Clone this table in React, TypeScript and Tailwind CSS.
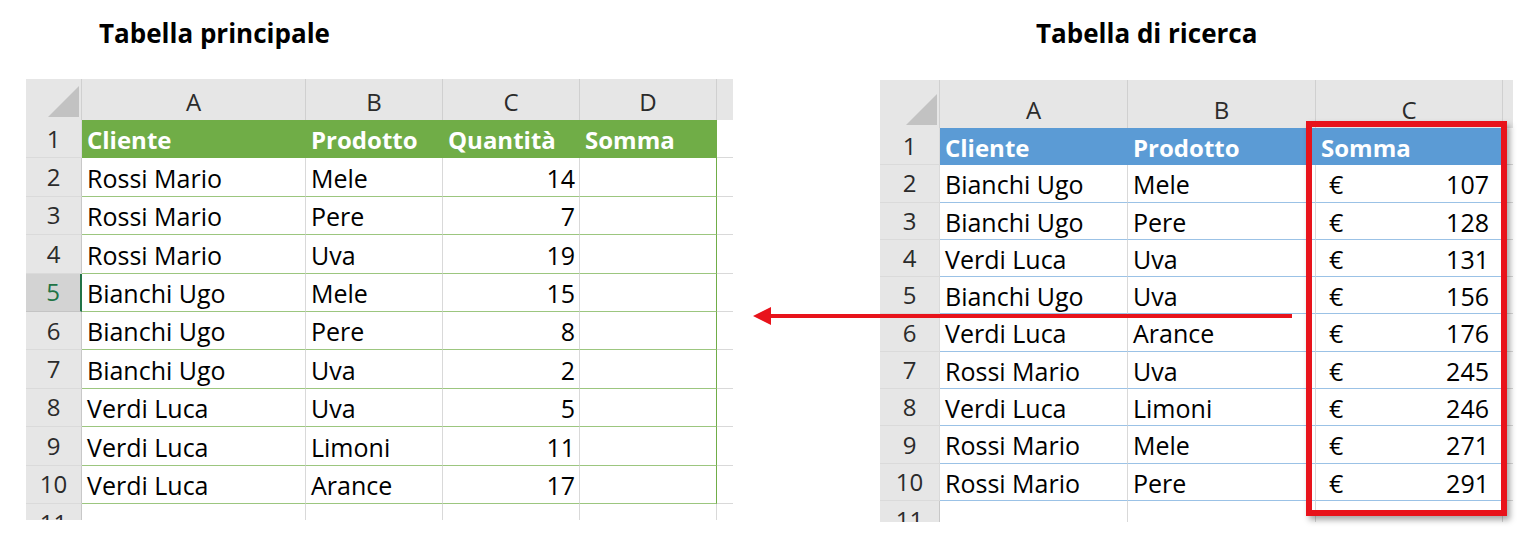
import React from 'react';

const leftRows: string[][] = [
  ['Rossi Mario', 'Mele', '14', ''],
  ['Rossi Mario', 'Pere', '7', ''],
  ['Rossi Mario', 'Uva', '19', ''],
  ['Bianchi Ugo', 'Mele', '15', ''],
  ['Bianchi Ugo', 'Pere', '8', ''],
  ['Bianchi Ugo', 'Uva', '2', ''],
  ['Verdi Luca', 'Uva', '5', ''],
  ['Verdi Luca', 'Limoni', '11', ''],
  ['Verdi Luca', 'Arance', '17', ''],
];

const rightRows: string[][] = [
  ['Bianchi Ugo', 'Mele', '107'],
  ['Bianchi Ugo', 'Pere', '128'],
  ['Verdi Luca', 'Uva', '131'],
  ['Bianchi Ugo', 'Uva', '156'],
  ['Verdi Luca', 'Arance', '176'],
  ['Rossi Mario', 'Uva', '245'],
  ['Verdi Luca', 'Limoni', '246'],
  ['Rossi Mario', 'Mele', '271'],
  ['Rossi Mario', 'Pere', '291'],
];

function Corner({ w }: { w: string }) {
  return (
    <div className={`${w} h-full flex items-end justify-end pr-[2px] pb-[3px] border-r border-[#d0d0d0]`}>
      <div className="w-[31px] h-[31px] bg-[#c2c2c2] [clip-path:polygon(100%_0,100%_100%,0_100%)]" />
    </div>
  );
}

function LeftSheet() {
  const cols = ['w-[224px]', 'w-[137px]', 'w-[137px]', 'w-[137px]'];
  const rowH = 'h-[38.4px]';
  return (
    <div className="w-[707px] h-[441px] overflow-hidden">
      {/* column letters */}
      <div className="flex h-[41px] bg-[#e6e6e6] text-[24px] text-[#2b2b2b]">
        <Corner w="w-[56px]" />
        {['A', 'B', 'C', 'D'].map((l, i) => (
          <div key={l} className={`${cols[i]} flex items-end justify-center pb-[4px] leading-none border-r border-[#d0d0d0]`}>
            <span className="mb-[2px]">{l}</span>
          </div>
        ))}
        <div className="flex-1" />
      </div>

      {/* header row */}
      <div className={`flex ${rowH}`}>
        <div className="w-[56px] flex items-center justify-center bg-[#e6e6e6] border-r border-[#c8c8c8] border-b border-[#dadada] text-[24px] text-[#2b2b2b]">1</div>
        <div className="flex bg-[#70ad47] text-white font-bold text-[24px]">
          {['Cliente', 'Prodotto', 'Quantità', 'Somma'].map((h, i) => (
            <div key={h} className={`${cols[i]} flex items-center pl-[5px] pt-[2px]`}>{h}</div>
          ))}
        </div>
        <div className="flex-1 border-b border-[#d9d9d9]" />
      </div>

      {leftRows.map((r, ri) => {
        const selected = ri === 3;
        return (
          <div key={ri} className={`flex ${rowH}`}>
            <div className={`w-[56px] flex items-center justify-center border-b text-[24px] ${selected ? 'bg-[#d3d3d3] text-[#217346] border-[#c4c4c4] border-r-[2px] border-r-[#217346]' : 'bg-[#e6e6e6] text-[#2b2b2b] border-[#dadada] border-r border-r-[#c8c8c8]'}`}>
              {ri + 2}
            </div>
            {r.map((c, ci) => (
              <div
                key={ci}
                className={`${cols[ci]} flex items-center pt-[3px] text-[25px] text-black border-b border-[#9cc67f] ${ci === 3 ? 'border-r border-r-[#70ad47]' : 'border-r border-r-[#d9d9d9]'} ${ci === 2 ? 'justify-end pr-[4px]' : 'pl-[5px]'}`}
              >
                {c}
              </div>
            ))}
            <div className="flex-1 border-b border-[#d9d9d9]" />
          </div>
        );
      })}

      {/* row 11 */}
      <div className={`flex ${rowH}`}>
        <div className="w-[56px] flex items-center justify-center bg-[#e6e6e6] border-r border-[#c8c8c8] text-[24px] text-[#2b2b2b]">11</div>
        {cols.map((w, i) => (
          <div key={i} className={`${w} border-r border-[#d9d9d9]`} />
        ))}
      </div>
    </div>
  );
}

function RightSheet() {
  const cols = ['w-[188px]', 'w-[188px]', 'w-[187px]'];
  const rowH = 'h-[37.3px]';
  return (
    <div className="w-[633px] h-[442px] overflow-hidden">
      <div className="flex h-[48px] bg-[#e6e6e6] text-[24px] text-[#2b2b2b]">
        <Corner w="w-[60px]" />
        {['A', 'B', 'C'].map((l, i) => (
          <div key={l} className={`${cols[i]} flex items-end justify-center pb-[6px] leading-none border-r border-[#d0d0d0]`}>
            <span>{l}</span>
          </div>
        ))}
        <div className="flex-1" />
      </div>

      <div className={`flex ${rowH}`}>
        <div className="w-[60px] flex items-center justify-center bg-[#e6e6e6] border-r border-[#c8c8c8] border-b border-[#dadada] text-[24px] text-[#2b2b2b]">1</div>
        <div className="flex bg-[#5b9bd5] text-white font-bold text-[24px]">
          {['Cliente', 'Prodotto', 'Somma'].map((h, i) => (
            <div key={h} className={`${cols[i]} flex items-center pl-[5px] pt-[2px]`}>{h}</div>
          ))}
        </div>
        <div className="flex-1 border-b border-[#d9d9d9]" />
      </div>

      {rightRows.map((r, ri) => (
        <div key={ri} className={`flex ${rowH}`}>
          <div className="w-[60px] flex items-center justify-center bg-[#e6e6e6] border-r border-[#c8c8c8] border-b border-[#dadada] text-[24px] text-[#2b2b2b]">
            {ri + 2}
          </div>
          <div className={`${cols[0]} flex items-center pl-[5px] pt-[3px] text-[25px] text-black border-b border-[#9bc2e6] border-r border-r-[#d9d9d9]`}>{r[0]}</div>
          <div className={`${cols[1]} flex items-center pl-[5px] pt-[3px] text-[25px] text-black border-b border-[#9bc2e6] border-r border-r-[#d9d9d9]`}>{r[1]}</div>
          <div className={`${cols[2]} flex items-center justify-between pl-[13px] pr-[13px] pt-[3px] text-[25px] text-black border-b border-[#9bc2e6] border-r border-r-[#9bc2e6]`}>
            <span>€</span>
            <span>{r[2]}</span>
          </div>
          <div className="flex-1 border-b border-[#d9d9d9]" />
        </div>
      ))}

      <div className={`flex ${rowH}`}>
        <div className="w-[60px] flex items-center justify-center bg-[#e6e6e6] border-r border-[#c8c8c8] text-[24px] text-[#2b2b2b]">11</div>
        {cols.map((w, i) => (
          <div key={i} className={`${w} border-r border-[#d9d9d9]`} />
        ))}
      </div>
    </div>
  );
}

export default function App() {
  return (
    <div className="relative w-[1539px] h-[547px] overflow-hidden bg-white font-['Open_Sans',sans-serif]">
      <div className="flex items-start">
        <div className="ml-[26px] flex flex-col">
          <div className="h-[79px] pl-[73px] pt-[16px] text-[26px] font-bold text-black leading-[35px]">Tabella principale</div>
          <LeftSheet />
        </div>
        <div className="ml-[147px] flex flex-col">
          <div className="h-[80px] pl-[156px] pt-[16px] text-[26px] font-bold text-black leading-[35px]">Tabella di ricerca</div>
          <RightSheet />
        </div>
      </div>

      {/* highlight box over column C */}
      <div className="absolute left-[1306px] top-[121px] w-[201px] h-[395px] border-[6px] border-[#e8131b] shadow-[3px_4px_6px_rgba(0,0,0,0.35)] pointer-events-none" />

      {/* arrow */}
      <svg className="absolute left-[750px] top-[304px]" width="546" height="24" viewBox="0 0 546 24">
        <line x1="18" y1="12" x2="542" y2="12" stroke="#e8131b" strokeWidth="4" />
        <polygon points="3,12 21,3 21,21" fill="#e8131b" />
      </svg>
    </div>
  );
}
